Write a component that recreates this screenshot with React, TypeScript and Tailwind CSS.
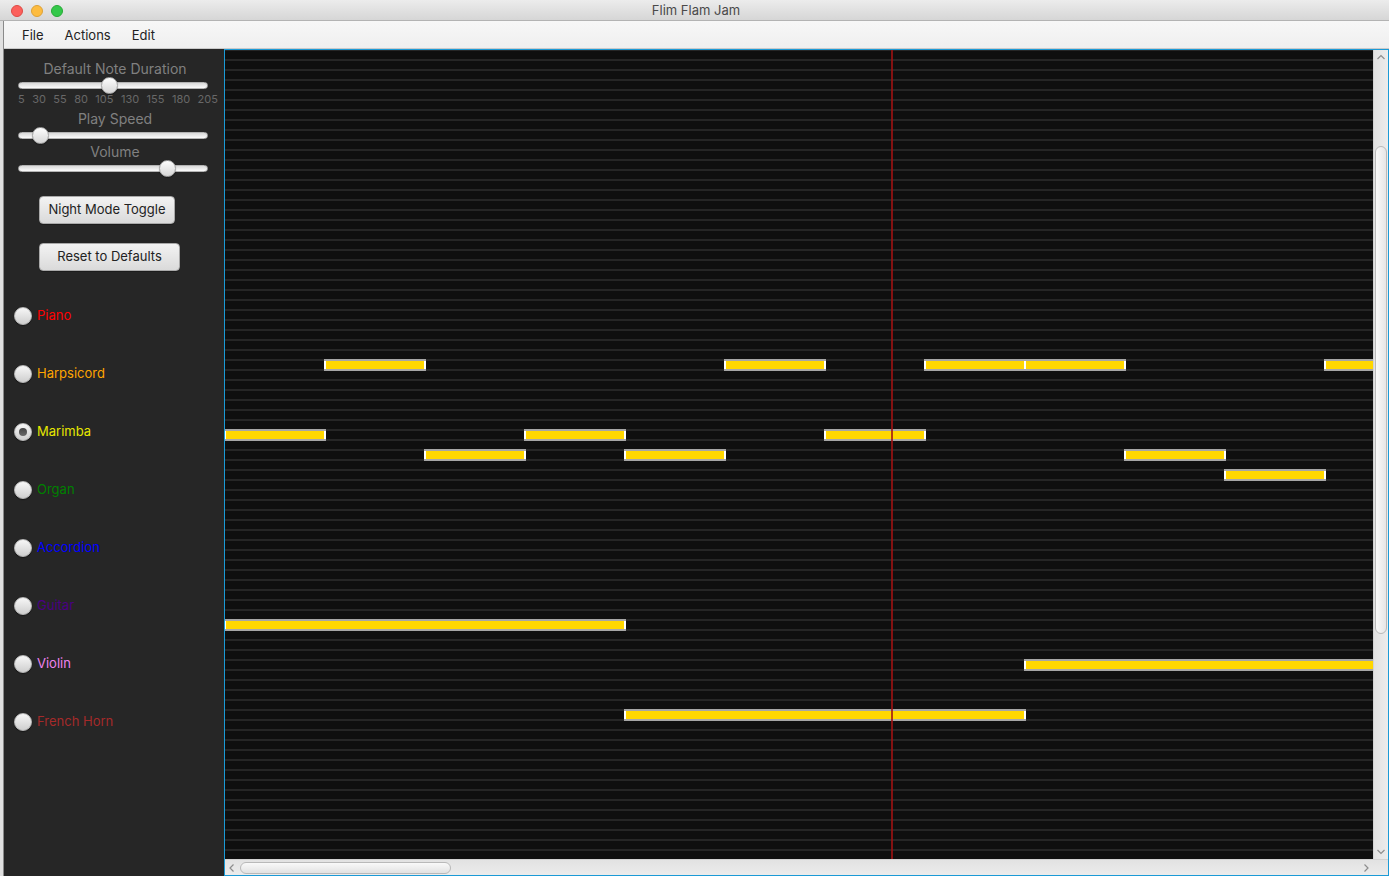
import React from 'react'

const font = "font-['Inter','Liberation_Sans',sans-serif]"

const instruments: [string, string][] = [
    ['Piano', '#ff0000'],
    ['Harpsicord', '#ffa500'],
    ['Marimba', '#e6e600'],
    ['Organ', '#008000'],
    ['Accordion', '#0000ff'],
    ['Guitar', '#4b0082'],
    ['Violin', '#ee82ee'],
    ['French Horn', '#a52a2a'],
]

// row, x (px inside the roll), width
const notes: [number, number, number][] = [
    [30, 99, 102], [30, 499, 102], [30, 699, 102], [30, 799, 102], [30, 1099, 102],
    [37, -1, 102], [37, 299, 102], [37, 599, 102],
    [39, 199, 102], [39, 399, 102], [39, 899, 102],
    [41, 999, 102],
    [56, -1, 402],
    [60, 799, 402],
    [65, 399, 402],
]

const Slider = ({ pos }: { pos: number }) => (
    <div className="h-[16px] flex items-center pl-[14px]">
        <div className="relative w-[190px] h-[7px] rounded-full border border-[#b4b4b4] bg-gradient-to-b from-[#d9d9d9] to-[#fbfbfb]">
            <div
                className="absolute top-[-6px] w-[17px] h-[17px] rounded-full border border-[#a3a3a3] bg-gradient-to-b from-[#fdfdfd] to-[#d6d6d6] shadow-[0_1px_1px_rgba(0,0,0,0.35)]"
                style={{ left: pos - 9 }}
            />
        </div>
    </div>
)

const Label = ({ text }: { text: string }) => (
    <div className="h-[16px] leading-[16px] text-center text-[14px] text-[#808080] pl-[2px]">{text}</div>
)

const Button = ({ text, w }: { text: string; w: string }) => (
    <div className="pl-[35px]">
        <button className={`${w} h-[28px] rounded-[4px] border border-[#a9a9a9] bg-gradient-to-b from-[#f3f3f3] to-[#dadada] text-[13px] text-[#222] shadow-[0_1px_0_rgba(0,0,0,0.25)]`}>
            {text}
        </button>
    </div>
)

const Chevron = ({ d }: { d: string }) => (
    <svg width="10" height="10" viewBox="0 0 10 10" fill="none" stroke="#8d8d8d" strokeWidth="1.2">
        <path d={d} />
    </svg>
)

const Sidebar = () => (
    <div className="w-[220px] shrink-0 bg-[#262626] pt-[12px] flex flex-col">
        <Label text="Default Note Duration" />
        <Slider pos={91} />
        <div className="h-[12px] w-[200px] ml-[14px] flex justify-between text-[11px] leading-[12px] text-[#686868]">
            {['5', '30', '55', '80', '105', '130', '155', '180', '205'].map((t) => (
                <span key={t}>{t}</span>
            ))}
        </div>
        <div className="mt-[6px]"><Label text="Play Speed" /></div>
        <Slider pos={22} />
        <div className="mt-[1px]"><Label text="Volume" /></div>
        <Slider pos={149} />
        <div className="mt-[20px]"><Button text="Night Mode Toggle" w="w-[136px]" /></div>
        <div className="mt-[19px]"><Button text="Reset to Defaults" w="w-[141px]" /></div>
        <div className="mt-[16px] flex flex-col">
            {instruments.map(([name, color]) => (
                <div key={name} className="h-[58px] flex items-center pl-[10px] gap-[5px]">
                    <div className="w-[18px] h-[18px] rounded-full border border-[#b8b8b8] bg-gradient-to-b from-[#f7f7f7] to-[#cfcfcf] shadow-[0_1px_1px_rgba(0,0,0,0.4)] flex items-center justify-center">
                        {name === 'Marimba' && <div className="w-[8px] h-[8px] rounded-full bg-gradient-to-b from-[#444] to-[#6a6a6a]" />}
                    </div>
                    <span className="text-[13px]" style={{ color }}>{name}</span>
                </div>
            ))}
        </div>
    </div>
)

const Roll = () => (
    <div className="flex-1 min-w-0 flex flex-col border border-[#1b9ad6]">
        <div className="flex-1 flex min-h-0">
            <div className="relative flex-1 overflow-hidden bg-[repeating-linear-gradient(to_bottom,#262626_0px,#262626_1px,#0f0f0f_1px,#0f0f0f_9px,#262626_9px,#262626_10px)]">
                {notes.map(([row, x, w], i) => (
                    <div
                        key={i}
                        className="absolute h-[12px] bg-[#a6a6a6] py-[2px]"
                        style={{ top: 9 + row * 10, left: x, width: w }}
                    >
                        <div className="h-full bg-[#ffd700] border-x-2 border-white" />
                    </div>
                ))}
                <div className="absolute top-0 bottom-0 left-[666px] w-[2px] bg-[#a01212]/80" />
            </div>
            <div className="w-[15px] shrink-0 bg-gradient-to-r from-[#e2e2e2] to-[#ececec] border-l border-[#d2d2d2] flex flex-col items-center pt-[2px] pb-[2px]">
                <Chevron d="M1.5 7 L5 3.5 L8.5 7" />
                <div className="mt-[84px] w-[12px] h-[488px] rounded-[6px] border border-[#b9b9b9] bg-gradient-to-r from-[#f9f9f9] to-[#e6e6e6]" />
                <div className="flex-1" />
                <Chevron d="M1.5 3 L5 6.5 L8.5 3" />
            </div>
        </div>
        <div className="h-[16px] shrink-0 bg-gradient-to-b from-[#e2e2e2] to-[#ececec] border-t border-[#d2d2d2] flex items-center pl-[2px] pr-[17px]">
            <Chevron d="M6.5 1.5 L3 5 L6.5 8.5" />
            <div className="ml-[3px] w-[211px] h-[12px] rounded-[6px] border border-[#b9b9b9] bg-gradient-to-b from-[#f9f9f9] to-[#e2e2e2]" />
            <div className="flex-1" />
            <Chevron d="M3.5 1.5 L7 5 L3.5 8.5" />
        </div>
    </div>
)

export default function App() {
    return (
        <div className={`w-[1389px] h-[876px] overflow-hidden flex flex-col bg-[#262626] ${font}`}>
            <div className="h-[21px] shrink-0 pt-[1px] grid grid-cols-[1fr_auto_1fr] items-center bg-gradient-to-b from-[#ececec] to-[#d6d6d6] border-b border-[#b3b3b3]">
                <div className="flex items-center gap-[8px] pl-[11px]">
                    <div className="w-[12px] h-[12px] rounded-full bg-[#fc605c] border border-[#de4a45]" />
                    <div className="w-[12px] h-[12px] rounded-full bg-[#fdbc40] border border-[#dea236]" />
                    <div className="w-[12px] h-[12px] rounded-full bg-[#34c84a] border border-[#27aa35]" />
                </div>
                <div className="text-[13px] text-[#4a4a4a] pl-[3px]">Flim Flam Jam</div>
                <div />
            </div>
            <div className="flex-1 flex min-h-0">
                <div className="w-[4px] shrink-0 bg-[#e0e0e0] border-r border-[#8a8a8a]" />
                <div className="flex-1 flex flex-col min-w-0">
                    <div className="h-[28px] shrink-0 pt-[2px] flex items-center gap-[21px] pl-[18px] bg-gradient-to-b from-[#f7f7f7] to-[#efefef] border-b border-[#c9c9c9] text-[13px] text-[#222]">
                        <span>File</span>
                        <span>Actions</span>
                        <span>Edit</span>
                    </div>
                    <div className="flex-1 flex min-h-0">
                        <Sidebar />
                        <Roll />
                    </div>
                </div>
            </div>
        </div>
    )
}
